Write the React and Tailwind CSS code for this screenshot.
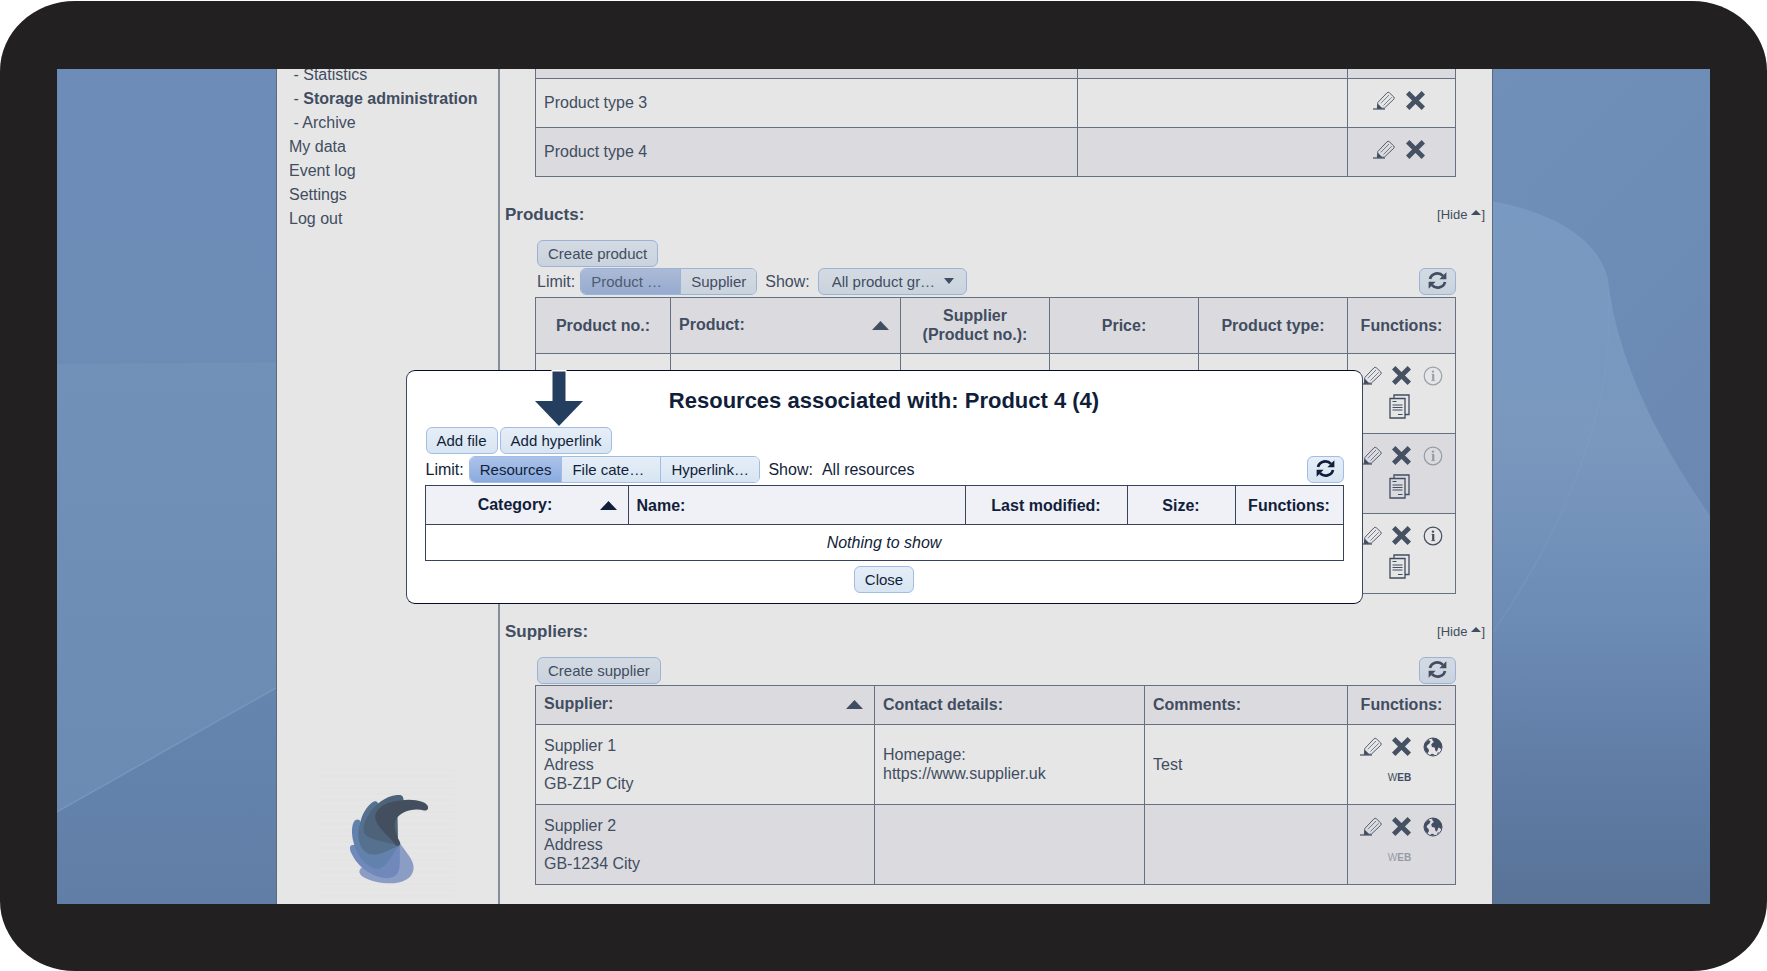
import React from 'react'
import clsx from 'clsx'

const MENU = [
  { label: 'Statistics', sub: true },
  { label: 'Storage administration', sub: true, active: true },
  { label: 'Archive', sub: true },
  { label: 'My data' },
  { label: 'Event log' },
  { label: 'Settings' },
  { label: 'Log out' },
]

const SUPPLIERS = [
  { address: ['Supplier 1', 'Adress', 'GB-Z1P City'], contact: ['Homepage:', 'https://www.supplier.uk'], comment: 'Test', web: true },
  { address: ['Supplier 2', 'Address', 'GB-1234 City'], contact: [], comment: '', web: false },
]

const CELL = 'border border-[#657083] px-2'
const MODAL_CELL = 'border border-[#35435c] px-2'

export default function App() {
  return (
    <div className="h-screen bg-white pt-px font-['Liberation_Sans',Arial,sans-serif] text-[16px] leading-[19px] text-[#414d61]">
      <div className="h-full rounded-[75px/70px] bg-[#222021] px-[57px] pt-[68px] pb-[67px]">
        <div className="relative flex h-full overflow-hidden pl-[219px] pr-[217px]">
          <Backdrop />
          <div className="relative flex min-w-0 flex-1 border-x border-[#5f6b7d] bg-[#e6e6e6]">
            <Sidebar />
            <main className="min-w-0 flex-1">
              <ProductTypes />
              <Products />
              <Suppliers />
            </main>
          </div>
          <ResourceDialog />
        </div>
      </div>
    </div>
  )
}

function Sidebar() {
  return (
    <aside className="flex w-[223px] shrink-0 flex-col border-r-2 border-[#868d9b]">
      <nav className="-mt-[6px] flex flex-col pl-3 leading-[24px]">
        {MENU.map(m => (
          <a key={m.label} href="#" className="whitespace-pre">
            {m.sub && ' - '}<span className={clsx(m.active && 'font-bold')}>{m.label}</span>
          </a>
        ))}
      </nav>
      <div className="mt-auto mb-[3px] flex justify-center"><Logo /></div>
    </aside>
  )
}

function ProductTypes() {
  return (
    <div className="pl-[35px] pr-9">
      <table className="w-full table-fixed border-collapse">
        <colgroup><col /><col className="w-[270px]" /><col className="w-[108px]" /></colgroup>
        <tbody>
          {/* tail of the row that is scrolled out of view */}
          <tr className="h-[9px] bg-[#dbdbdf]">
            {[0, 1, 2].map(i => <td key={i} className="border border-t-0 border-[#657083] p-0" />)}
          </tr>
          {['Product type 3', 'Product type 4'].map((t, i) => (
            <tr key={t} className={clsx('h-[49px]', i % 2 === 1 && 'bg-[#dbdbdf]')}>
              <td className={CELL}>{t}</td>
              <td className={CELL} />
              <td className="border border-[#657083] pr-1 pb-1">
                <div className="flex justify-center"><IconButton label="Edit"><Pencil /></IconButton><IconButton label="Delete"><Cross /></IconButton></div>
              </td>
            </tr>
          ))}
        </tbody>
      </table>
    </div>
  )
}

function Products() {
  return (
    <section>
      <SectionHead title="Products:" />
      <div className="pl-[35px] pr-9">
        <div className="flex pl-[2px]"><Button>Create product</Button></div>
        <div className="mt-px mb-[2px] flex items-center pl-[2px]">
          <span className="mr-[5px]">Limit:</span>
          <Segments items={[['Product …', true], ['Supplier']]} />
          <label htmlFor="product-group" className="mx-2">Show:</label>
          <span className="relative flex">
            <select id="product-group" className="h-[27px] w-[149px] appearance-none rounded-[6px] border border-[#9db3d6] bg-linear-to-b from-[#d4dae2] to-[#c9d3de] pl-[13px] text-[15px]">
              <option>All product gr…</option>
            </select>
            <Triangle className="pointer-events-none absolute top-[10px] right-[13px] h-[6px] w-[10px] rotate-180" />
          </span>
          <Refresh />
        </div>
        <table className="w-full table-fixed border-collapse">
          <colgroup>
            <col className="w-[135px]" /><col /><col className="w-[149px]" /><col className="w-[149px]" />
            <col className="w-[149px]" /><col className="w-[108px]" />
          </colgroup>
          <thead>
            <tr className="h-[56px] bg-[#dbdbdf]">
              <th className={CELL}>Product no.:</th>
              <SortHead className={CELL} label="Product:" />
              <th className={CELL}>Supplier<br />(Product no.):</th>
              <th className={CELL}>Price:</th>
              <th className={CELL}>Product type:</th>
              <th className="border border-[#657083]">Functions:</th>
            </tr>
          </thead>
          <tbody>
            {[false, false, true].map((hasInfo, i) => (
              <tr key={i} className={clsx('h-[80px]', i === 1 && 'bg-[#dbdbdf]')}>
                {[0, 1, 2, 3, 4].map(c => <td key={c} className={CELL} />)}
                <td className="border border-[#657083] pb-1">
                  <Functions
                    last={<IconButton label="Info" dim={!hasInfo}><Info /></IconButton>}
                    below={<IconButton label="Resources"><Documents /></IconButton>}
                  />
                </td>
              </tr>
            ))}
          </tbody>
        </table>
      </div>
    </section>
  )
}

function Suppliers() {
  return (
    <section>
      <SectionHead title="Suppliers:" />
      <div className="pl-[35px] pr-9">
        <div className="mb-px flex pl-[2px]"><Button>Create supplier</Button><Refresh /></div>
        <table className="w-full table-fixed border-collapse">
          <colgroup><col /><col className="w-[270px]" /><col className="w-[203px]" /><col className="w-[108px]" /></colgroup>
          <thead>
            <tr className="h-[39px] bg-[#dbdbdf] text-left">
              <SortHead className={CELL} label="Supplier:" />
              <th className={CELL}>Contact details:</th>
              <th className={CELL}>Comments:</th>
              <th className="border border-[#657083] text-center">Functions:</th>
            </tr>
          </thead>
          <tbody>
            {SUPPLIERS.map((s, i) => (
              <tr key={i} className={clsx('h-[80px]', i === 1 && 'bg-[#dbdbdf]')}>
                <td className={CELL}>{s.address.map(l => <div key={l}>{l}</div>)}</td>
                <td className={CELL}>{s.contact.map(l => <div key={l}>{l}</div>)}</td>
                <td className={CELL}>{s.comment}</td>
                <td className="border border-[#657083] pb-1">
                  <Functions
                    last={<IconButton label="Country"><Globe /></IconButton>}
                    below={
                      <IconButton label="Web" dim={!s.web}>
                        <span className="text-[10px] leading-[12px] font-bold"><span className="font-normal">W</span>EB</span>
                      </IconButton>
                    }
                  />
                </td>
              </tr>
            ))}
          </tbody>
        </table>
      </div>
    </section>
  )
}

function ResourceDialog() {
  return (
    <div className="absolute inset-x-0 top-[301px] flex justify-center pl-px">
      <div role="dialog" aria-labelledby="dialog-title" className="relative w-[957px] rounded-[9px] border border-x-[#3a4861] border-y-[#060c26] bg-white px-[18px] pt-[17px] pb-[10px] text-[#111e3a]">
        <svg viewBox="0 0 50 56" className="absolute -top-px left-[127px] h-[56px] w-[50px]" aria-hidden="true">
          <path d="M17.500 0h15v2h-15z" fill="#fff" />
          <path d="M18.500 1.500h13V31H49L25 56 1 31h17.500z" fill="#243e60" />
        </svg>
        <h2 id="dialog-title" className="mb-[13px] text-center text-[22px] leading-[26px] font-bold">Resources associated with: Product 4 (4)</h2>
        <div className="flex gap-[2px] pl-px"><Button bright>Add file</Button><Button bright>Add hyperlink</Button></div>
        <div className="mt-[2px] mb-[2px] flex items-center pl-px">
          <span className="mr-[5px]">Limit:</span>
          <Segments bright items={[['Resources', true], ['File cate…'], ['Hyperlink…']]} />
          <span className="mx-2">Show:</span>
          <span className="pl-px">All resources</span>
          <Refresh bright />
        </div>
        <table className="w-full table-fixed border-collapse">
          <colgroup>
            <col className="w-[203px]" /><col /><col className="w-[162px]" /><col className="w-[108px]" /><col className="w-[108px]" />
          </colgroup>
          <thead>
            <tr className="h-[39px] bg-[#f0f0f7]">
              <SortHead className={MODAL_CELL} label="Category:" center />
              <th className={clsx(MODAL_CELL, 'text-left')}>Name:</th>
              <th className={MODAL_CELL}>Last modified:</th>
              <th className={MODAL_CELL}>Size:</th>
              <th className="border border-[#35435c]">Functions:</th>
            </tr>
          </thead>
          <tbody>
            <tr className="h-[36px]">
              <td colSpan={5} className={clsx(MODAL_CELL, 'text-center italic')}>Nothing to show</td>
            </tr>
          </tbody>
        </table>
        <div className="mt-[5px] flex justify-center"><Button bright>Close</Button></div>
      </div>
    </div>
  )
}

const SectionHead = ({ title }) => (
  <div className="mt-7 mb-[15px] flex h-5 items-center justify-between pr-[7px] pl-[5px]">
    <h2 className="text-[17px] font-bold">{title}</h2>
    <button className="flex items-center text-[13px]">[Hide <Triangle className="ml-1 mb-1 h-[5px] w-[10px]" />]</button>
  </div>
)

const SortHead = ({ label, center, className }) => (
  <th className={className}>
    <div className="flex items-center gap-[3px] pr-[3px] pb-[2px]">
      <span className={clsx('flex-1', center ? 'text-center' : 'text-left')}>{label}</span>
      <Triangle className="mt-[2px] h-[9px] w-[17px]" />
    </div>
  </th>
)

const Button = ({ children, bright }) => (
  <button className={clsx('h-[27px] rounded-[6px] border bg-linear-to-b px-[10px] text-[15px]',
    bright ? 'border-[#a3bce6] from-[#e6eef7] to-[#d7e5f2]' : 'border-[#9db3d6] from-[#d4dae2] to-[#c9d3de]')}>
    {children}
  </button>
)

const Refresh = ({ bright }) => (
  <button aria-label="Refresh" className={clsx('ml-auto flex h-[27px] w-[37px] justify-center rounded-[6px] border bg-linear-to-b pt-[2px]',
    bright ? 'border-[#a3bce6] from-[#e6eef7] to-[#d7e5f2]' : 'border-[#9db3d6] from-[#d4dae2] to-[#c9d3de]')}>
    <svg viewBox="0 0 18 18" width="19" height="19" aria-hidden="true">
      <path d="M1.900 7.600A7.200 7.200 0 0 1 14.200 4.600M16.100 10.400A7.200 7.200 0 0 1 3.800 13.400" fill="none" stroke="currentColor" strokeWidth="2.600" />
      <path d="M17.400 1.200V7.700H10.800zM.6 16.800V10.300H7.200z" fill="currentColor" />
    </svg>
  </button>
)

const Segments = ({ items, bright }) => (
  <div className={clsx('flex h-[27px] overflow-hidden rounded-[6px] border', bright ? 'border-[#a3bce6]' : 'border-[#9db3d6]')}>
    {items.map(([label, active], i) => (
      <button key={label} className={clsx('bg-linear-to-b px-[10px] text-left text-[15px]',
        label.endsWith('…') && 'w-[99px]',
        i > 0 && 'border-l',
        bright ? 'border-[#a3bce6]' : 'border-[#9db3d6]',
        bright && (active ? 'from-[#abc3e9] to-[#8aaade]' : 'from-[#e6eef7] to-[#d7e5f2]'),
        !bright && (active ? 'from-[#abbbd6] to-[#97abd0] text-[#4e5b70]' : 'from-[#d4dae2] to-[#c9d3de]'))}>
        {label}
      </button>
    ))}
  </div>
)

const IconButton = ({ label, dim, children }) => (
  <button aria-label={label} className={clsx('flex h-[31px] w-[31px] items-center justify-center', dim && 'opacity-45')}>{children}</button>
)

const Functions = ({ last, below }) => (
  <div className="flex flex-col items-center">
    <div className="flex"><IconButton label="Edit"><Pencil /></IconButton><IconButton label="Delete"><Cross /></IconButton>{last}</div>
    <div className="pr-1">{below}</div>
  </div>
)

const Triangle = ({ className }) => (
  <svg viewBox="0 0 17 9" preserveAspectRatio="none" className={className} aria-hidden="true"><path d="M8.500 0 17 9H0z" fill="currentColor" /></svg>
)

const Pencil = () => (
  <svg viewBox="0 0 22 19" width="22" height="19" fill="none" stroke="currentColor" aria-hidden="true">
    <path d="M4.800 11.500 14 1.800Q15.200.6 16.500 1.900L20.800 6Q21.800 7.200 20.700 8.300L11.500 17" strokeWidth=".9" />
    <path d="M7.800 12.300 16 4M10.500 14.500 18.700 6.300" strokeWidth=".9" opacity=".75" />
    <path d="M4.800 11.500 4.300 17.500 11.500 17" strokeWidth=".8" />
    <path d="M4.600 12.500 9.500 17.500H4z" fill="currentColor" stroke="none" />
    <path d="M0 18h12" strokeWidth="1.200" />
  </svg>
)

const Cross = () => (
  <svg viewBox="0 0 19 19" width="19" height="19" stroke="#465263" strokeWidth="4.800" aria-hidden="true"><path d="M1.700 1.700 17.300 17.300M17.300 1.700 1.700 17.300" /></svg>
)

const Info = () => (
  <svg viewBox="0 0 20 20" width="20" height="20" fill="none" stroke="currentColor" aria-hidden="true">
    <circle cx="10" cy="10" r="8.800" strokeWidth="1.200" />
    <circle cx="10" cy="5.600" r="1.200" fill="currentColor" stroke="none" />
    <path d="M10.200 8v6.500" strokeWidth="2.200" /><path d="M8.500 8.300h2M8.300 14.600h3.800" strokeWidth=".8" />
  </svg>
)

const Documents = () => (
  <svg viewBox="0 0 21 25" width="21" height="25" fill="none" stroke="currentColor" strokeWidth="1.300" aria-hidden="true">
    <path d="M5 4V1h15v19.500h-3.500M1 4.500h15v19.500H1z" />
    <path d="M3.500 7.500h4M3.500 11h10M3.500 13.500h10M3.500 16h10M9 20.500h4.500" strokeWidth="1.100" />
  </svg>
)

const Globe = () => (
  <svg viewBox="0 0 20 20" width="20" height="20" aria-hidden="true">
    <circle cx="10" cy="10" r="9" fill="none" stroke="currentColor" strokeWidth="1" />
    <path d="M1 9.500 2 6 5 3l2.500 1-1 2.500-2 1.500-1 2 2 2 .5 2-1.500 2.500L2 13.500zM9 1l4 .3 3.500 2.200 2 3.500.5 3.500-1.800 1.500-1-1.500-1 .5-1.200 3.500-1.500-.5-.8-3.500-2.700-.5-.8-2.500L9.500 6 11 5 9.500 3.500zM7 17.300l2.500-.5 2 1-1.500 1zM14 16l2-1-1 2z" fill="currentColor" />
  </svg>
)

function Logo() {
  return (
    <div className="bg-[repeating-linear-gradient(#e6e6e6_0_4px,#e4e4e4_4px_6px)]">
      <svg viewBox="177 72 406 408" width="135" height="136" aria-hidden="true">
        <path fill="#8b9cc5" d="M300 382C292 390 296 400 304 406C330 424 372 429 400 427C440 424 462 402 458 374C455 352 436 335 417 305L380 320Z" />
        <path fill="#7089ba" d="M277 312C266 310 264 322 272 338C290 380 340 412 378 412C408 412 417 392 417 365V308L340 290Z" />
        <path fill="#6282ad" d="M299 242C296 233 284 234 279 242C271 256 272 282 278 304C288 350 325 384 352 384C380 380 395 335 417 312L340 260Z" />
        <path fill="#56718f" d="M352 188C350 178 340 178 332 186C316 200 303 220 298 246C282 290 300 340 335 341C365 342 390 322 415 314L370 220Z" />
        <path fill="#4d637a" d="M428 182C430 164 422 160 408 162C375 164 342 192 325 218C305 250 302 272 318 285C340 300 380 302 412 314L410 220Z" />
        <path fill="#434f5e" d="M502 198C500 182 460 172 420 178C370 182 338 205 344 235C350 262 390 290 404 312C410 318 422 312 417 302C400 270 398 250 405 236C418 212 455 200 490 208C498 210 503 206 502 198Z" />
      </svg>
    </div>
  )
}

function Backdrop() {
  return (
    <svg viewBox="0 0 1653 834" preserveAspectRatio="none" className="absolute inset-0 h-full w-full" aria-hidden="true">
      <defs>
        <linearGradient id="base" x1="0" y1="0" x2="0" y2="1">
          <stop offset="0" stopColor="#6d8cb7" /><stop offset=".5" stopColor="#6c8cb6" /><stop offset="1" stopColor="#607ea6" />
        </linearGradient>
        <linearGradient id="band" x1="0" y1="0" x2="0" y2="1">
          <stop offset="0" stopColor="#7191b9" /><stop offset="1" stopColor="#6b8bb3" />
        </linearGradient>
        <linearGradient id="sky" x1="0" y1="0" x2="1" y2="1">
          <stop offset="0" stopColor="#7395c1" /><stop offset=".5" stopColor="#6e8db7" /><stop offset="1" stopColor="#6683ad" />
        </linearGradient>
        <linearGradient id="hill" x1="0" y1="0" x2="0" y2="1">
          <stop offset="0" stopColor="#7899c1" /><stop offset=".35" stopColor="#7a98be" /><stop offset=".6" stopColor="#6c8bb5" />
          <stop offset=".82" stopColor="#607ca5" /><stop offset="1" stopColor="#597397" />
        </linearGradient>
      </defs>
      <rect width="826" height="834" fill="url(#base)" />
      <path d="M0 295 221 293V617L0 742z" fill="url(#band)" />
      <path d="M0 742 221 617" stroke="#7796bc" strokeWidth="1.500" />
      <rect x="826" width="827" height="834" fill="url(#sky)" />
      <path d="M1380 127C1460 128 1538 155 1551 210C1560 290 1600 370 1653 446V834H1380z" fill="url(#hill)" />
      <path d="M1551 220C1562 340 1500 470 1435 564" fill="none" stroke="#86a3c6" strokeOpacity=".3" strokeWidth="1.500" />
    </svg>
  )
}
